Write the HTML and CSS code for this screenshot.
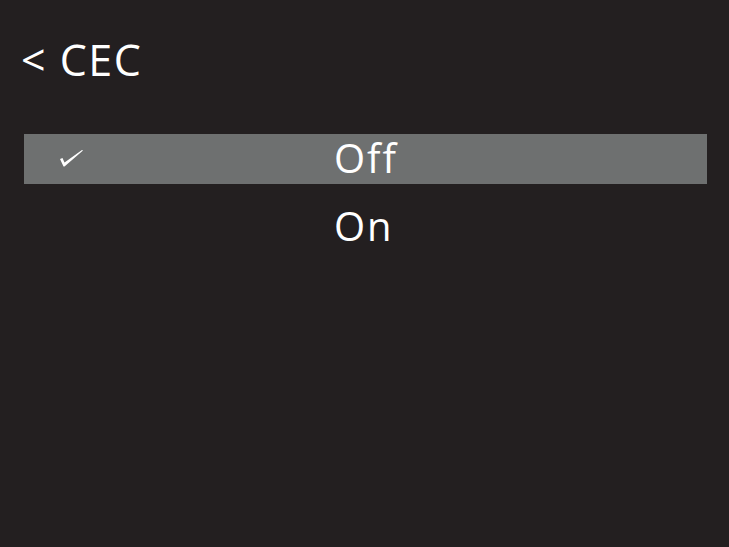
FILE: index.html
```html
<!DOCTYPE html>
<html>
<head>
<meta charset="utf-8">
<link rel="stylesheet" href="styles.css">
</head>
<body>
<div class="screen">
  <div class="title">&lt; CEC</div>
  <ul class="menu">
    <li class="item selected">
      <svg class="check" width="26" height="22" viewBox="0 0 26 22"><path d="M1 12 L3.5 11 L5.5 15.5 L23 3 L24 3.5 L5.5 19.5 L4.5 19.5 Z" fill="#ffffff"/></svg>
      <span class="label">Off</span>
    </li>
    <li class="item">
      <span class="label">On</span>
    </li>
  </ul>
</div>
</body>
</html>
```
FILE: styles.css
```css
html, body {
  margin: 0;
  padding: 0;
  background: #231f20;
}
.screen {
  width: 729px;
  height: 547px;
  background: #231f20;
  color: #ffffff;
  font-family: "Open Sans", "Noto Sans", sans-serif;
  padding-top: 38px;
  box-sizing: border-box;
}
.title {
  font-size: 43px;
  line-height: 44px;
  padding-left: 21px;
  letter-spacing: 1.5px;
}
.menu {
  list-style: none;
  margin: 52px 22px 0 24px;
  padding: 0;
  display: flex;
  flex-direction: column;
  gap: 17px;
}
.item {
  position: relative;
  height: 50px;
  display: flex;
  align-items: center;
  padding-left: 310px;
}
.item.selected {
  background: #6e7070;
}
.label {
  font-size: 40px;
  line-height: 50px;
  letter-spacing: 2px;
}
.selected .label {
  position: relative;
  top: -1px;
}
.check {
  position: absolute;
  left: 35px;
  top: 13px;
}
```
